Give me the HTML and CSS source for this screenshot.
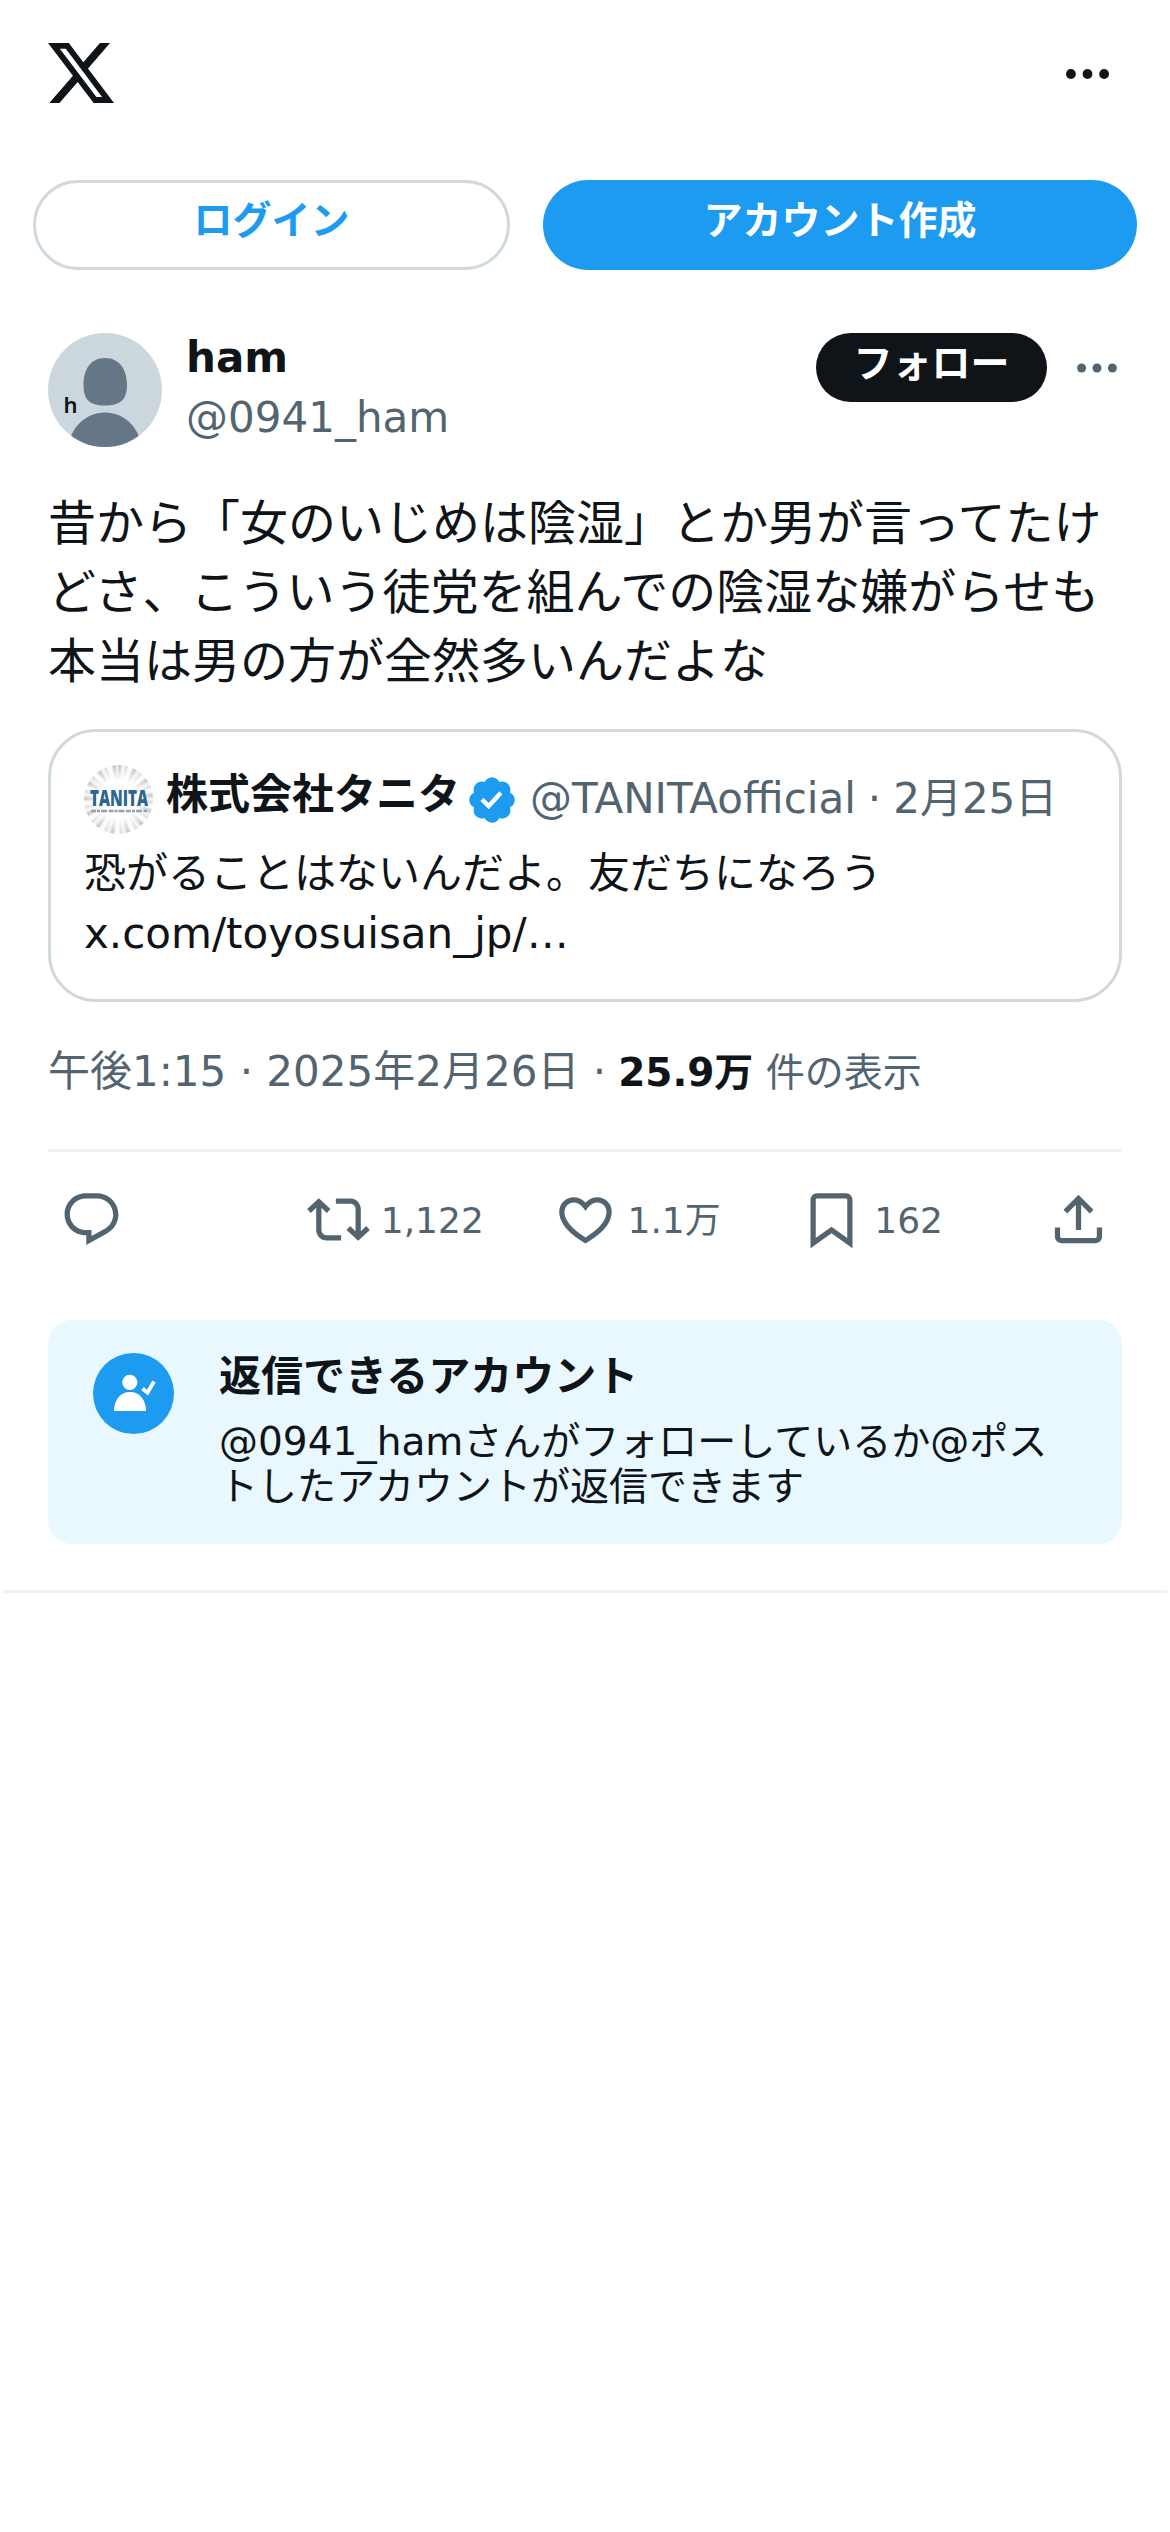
FILE: index.html
```html
<!DOCTYPE html>
<html lang="ja">
<head>
<meta charset="utf-8">
<title>ham (@0941_ham) / X</title>
<link rel="stylesheet" href="styles.css">
</head>
<body>
<header class="topbar">
  <svg class="logo" viewBox="1.254 2.25 21.573 19.5" preserveAspectRatio="none"><path d="M18.244 2.25h3.308l-7.227 8.26 8.502 11.24H16.17l-5.214-6.817L4.99 21.75H1.68l7.73-8.835L1.254 2.25H8.08l4.713 6.231zm-1.161 17.52h1.833L7.084 4.126H5.117z"/></svg>
  <svg class="more" viewBox="0 0 43 10"><circle cx="4.9" cy="5" r="4.9"/><circle cx="21.5" cy="5" r="4.9"/><circle cx="38.1" cy="5" r="4.9"/></svg>
</header>
<nav class="auth">
  <a class="btn login">ログイン</a>
  <a class="btn signup">アカウント作成</a>
</nav>
<main class="post">
  <div class="author">
    <svg class="avatar" viewBox="0 0 114 114">
      <defs><clipPath id="round"><circle cx="57" cy="57" r="57"/></clipPath></defs>
      <g clip-path="url(#round)">
        <rect width="114" height="114" fill="#ccd6dd"/>
        <path fill="#657786" d="M57 25c14 0 22 11 22 27 0 14-6 20.500-22 20.500S35.500 66 35.500 52C35.500 36 43 25 57 25zM20 114c3-20 18-34.500 37-34.500s34 14.500 37 34.500z"/>
        <text class="avatar-letter" x="15.500" y="80">h</text>
      </g>
    </svg>
    <div class="names">
      <div class="name">ham</div>
      <div class="handle">@0941_ham</div>
    </div>
    <a class="follow">フォロー</a>
    <svg class="post-more" viewBox="0 0 40 10"><circle cx="4.6" cy="5" r="4.5"/><circle cx="20" cy="5" r="4.5"/><circle cx="35.4" cy="5" r="4.5"/></svg>
  </div>
  <p class="body">昔から「女のいじめは陰湿」とか男が言ってたけ<br>どさ、こういう徒党を組んでの陰湿な嫌がらせも<br>本当は男の方が全然多いんだよな</p>
  <section class="quote">
    <div class="quote-head">
      <div class="quote-avatar">
        <svg viewBox="0 0 69 69"><text class="brand" x="6" y="41" textLength="58" lengthAdjust="spacingAndGlyphs">TANITA</text><path d="M7 46h56" fill="none" stroke="#8ea3b3" stroke-width="2.500" stroke-dasharray="5 1 3 1 6 1.500"/></svg>
      </div>
      <b class="quote-name">株式会社タニタ</b>
      <svg class="badge" viewBox="1.5 1.5 19 19"><path fill="#1d9bf0" d="M20.396 11c-.018-.646-.215-1.275-.57-1.816-.354-.54-.852-.972-1.438-1.246.223-.607.27-1.264.14-1.897-.131-.634-.437-1.218-.882-1.687-.47-.445-1.053-.75-1.687-.882-.633-.13-1.29-.083-1.897.14-.273-.587-.704-1.086-1.245-1.44S11.647 1.62 11 1.604c-.646.017-1.273.213-1.813.568s-.969.854-1.24 1.44c-.608-.223-1.267-.272-1.902-.14-.635.13-1.22.436-1.69.882-.445.47-.749 1.055-.878 1.688-.13.633-.08 1.29.144 1.896-.587.274-1.087.705-1.443 1.245-.356.54-.555 1.17-.574 1.817.02.647.218 1.276.574 1.817.356.54.856.972 1.443 1.245-.224.606-.274 1.263-.144 1.896.13.634.433 1.218.877 1.688.47.443 1.054.747 1.687.878.633.132 1.29.084 1.897-.136.274.586.705 1.084 1.246 1.439.54.354 1.17.551 1.816.569.647-.016 1.276-.213 1.817-.567s.972-.854 1.245-1.44c.604.239 1.266.296 1.903.164.636-.132 1.22-.447 1.68-.907.46-.46.776-1.044.908-1.681s.075-1.299-.165-1.903c.586-.274 1.084-.705 1.439-1.246.354-.54.551-1.17.569-1.816z"/><path fill="#fff" d="M9.662 14.85l-3.429-3.428 1.293-1.302 2.072 2.072 4.4-4.794 1.347 1.246z"/></svg>
      <span class="quote-meta">@TANITAofficial<span class="dot">·</span>2月25日</span>
    </div>
    <p class="quote-text">恐がることはないんだよ。友だちになろう<br>x.com/toyosuisan_jp/…</p>
  </section>
  <div class="stats">午後1:15 · 2025年2月26日 ·<span class="views"><b>25.9万</b> 件の表示</span></div>
  <div class="actions">
    <div class="action"><svg viewBox="0 0 24 24"><path d="M1.751 10c0-4.42 3.584-8 8.005-8h4.366c4.49 0 8.129 3.64 8.129 8.13 0 2.96-1.607 5.68-4.196 7.11l-8.054 4.46v-3.69h-.067c-4.49.1-8.183-3.51-8.183-8.01zm8.005-6c-3.317 0-6.005 2.69-6.005 6 0 3.37 2.77 6.08 6.138 6.01l.351-.01h1.761v2.3l5.087-2.81c1.951-1.08 3.163-3.13 3.163-5.36 0-3.39-2.744-6.13-6.129-6.13H9.756z"/></svg></div>
    <div class="action"><svg viewBox="0 0 24 24"><path d="M4.5 3.88l4.432 4.14-1.364 1.46L5.5 7.55V16c0 1.1.896 2 2 2H13v2H7.5c-2.209 0-4-1.79-4-4V7.55L1.432 9.48.068 8.02 4.5 3.88zM16.5 6H11V4h5.5c2.209 0 4 1.79 4 4v8.45l2.068-1.93 1.364 1.46-4.432 4.14-4.432-4.14 1.364-1.46 2.068 1.93V8c0-1.1-.896-2-2-2z"/></svg><span>1,122</span></div>
    <div class="action"><svg viewBox="0 0 24 24"><path d="M16.697 5.5c-1.222-.06-2.679.51-3.89 2.16l-.805 1.09-.806-1.09C9.984 6.01 8.526 5.44 7.304 5.5c-1.243.07-2.349.78-2.91 1.91-.552 1.12-.633 2.78.479 4.82 1.074 1.97 3.257 4.27 7.129 6.61 3.87-2.34 6.052-4.64 7.126-6.61 1.111-2.04 1.03-3.7.477-4.82-.561-1.13-1.666-1.84-2.908-1.91zm4.187 7.69c-1.351 2.48-4.001 5.12-8.379 7.67l-.503.3-.504-.3c-4.379-2.55-7.029-5.19-8.382-7.67-1.36-2.5-1.41-4.86-.514-6.67.887-1.79 2.647-2.91 4.601-3.01 1.651-.09 3.368.56 4.798 2.01 1.429-1.45 3.146-2.1 4.796-2.01 1.954.1 3.714 1.22 4.601 3.01.896 1.81.846 4.17-.514 6.67z"/></svg><span>1.1万</span></div>
    <div class="action"><svg viewBox="0 0 24 24"><path d="M4 4.5C4 3.12 5.119 2 6.5 2h11C18.881 2 20 3.12 20 4.5v18.44l-8-5.71-8 5.71V4.5zM6.5 4c-.276 0-.5.22-.5.5v14.56l6-4.29 6 4.29V4.5c0-.28-.224-.5-.5-.5h-11z"/></svg><span>162</span></div>
    <div class="action"><svg viewBox="0 0 24 24"><path d="M12 2.59l5.7 5.7-1.41 1.42L13 6.41V16h-2V6.41l-3.3 3.3-1.41-1.42L12 2.59zM21 15l-.02 3.51c0 1.38-1.12 2.49-2.5 2.49H5.5C4.11 21 3 19.88 3 18.5V15h2v3.5c0 .28.22.5.5.5h12.98c.28 0 .5-.22.5-.5L19 15h2z"/></svg></div>
  </div>
  <aside class="notice">
    <svg class="notice-icon" viewBox="0 0 81 81"><circle cx="40.5" cy="40.5" r="40.5" fill="#1d9bf0"/><circle cx="36.8" cy="29.3" r="7.6" fill="#fff"/><path fill="#fff" d="M21 58c0-11 6-19 16-19s16 8 16 19z"/><path d="M49.500 35.500l5 4.200 6.600-11.200" fill="none" stroke="#fff" stroke-width="3.800"/></svg>
    <div>
      <div class="notice-title">返信できるアカウント</div>
      <p class="notice-text">@0941_hamさんがフォローしているか@ポス<br>トしたアカウントが返信できます</p>
    </div>
  </aside>
</main>
<hr class="end">
</body>
</html>
```
FILE: styles.css
```css
* { box-sizing: border-box; }
body { margin: 0; background: #fff; color: #0f1419; font-family: "DejaVu Sans", "Noto Sans CJK JP", sans-serif; font-size: 42px; line-height: 60px; min-height: 2532px; }
p { margin: 0; }
svg { display: block; flex: none; }
.topbar { display: flex; justify-content: space-between; align-items: center; height: 147px; padding: 0 61px 0 48px; }
.logo { width: 66px; height: 60px; margin-top: -2px; fill: #0f1419; }
.more { width: 43px; height: 10px; fill: #0f1419; }
.auth { display: grid; grid-template-columns: 477px 594px; gap: 33px; padding: 33px 33px 0; }
.btn { height: 90px; border-radius: 45px; font-size: 39px; font-weight: 700; text-align: center; line-height: 82px; }
.login { border: 3px solid #cfd9de; color: #1d9bf0; line-height: 76px; }
.signup { background: #1d9bf0; color: #fff; }
.post { padding: 63px 48px 0; }
.author { display: flex; align-items: flex-start; height: 114px; }
.avatar { width: 114px; height: 114px; }
.avatar-letter { font: 600 22px "Noto Sans", sans-serif; fill: #0f1419; }
.names { margin: -5px auto 0 24px; }
.name { font-weight: 700; }
.handle, .quote-meta { color: #536471; }
.follow { width: 231px; height: 69px; border-radius: 35px; background: #0f1419; color: #fff; font-size: 39px; font-weight: 700; line-height: 62px; text-align: center; }
.post-more { width: 40px; height: 10px; margin: 30px 5px 0 30px; fill: #536471; }
.body { margin-top: 42px; font-size: 48px; line-height: 69px; white-space: nowrap; }
.quote { height: 273px; margin-top: 33px; padding: 33px 33px 0; border: 3px solid #cfd9de; border-radius: 48px; }
.quote-head { display: flex; height: 69px; white-space: nowrap; }
.quote-avatar { width: 69px; height: 69px; border-radius: 50%; background: radial-gradient(circle, #fff 38%, rgba(255,255,255,.15) 76%), repeating-conic-gradient(#b4b4b4 0 3deg, #ececec 7deg 10deg, #cacaca 14deg, #fafafa 18deg 23deg, #b4b4b4 27deg); }
.quote-avatar svg { width: 69px; height: 69px; }
.brand { font: 800 22px "Open Sans", sans-serif; fill: #2b668f; }
.quote-name { margin-left: 13px; }
.badge { width: 46px; height: 46px; margin: 12px 0 0 9px; }
.quote-meta { margin: 4px 0 0 15px; }
.dot { margin: 0 12px; }
.quote-text { margin-top: 10px; }
.stats { height: 147px; padding-top: 40px; color: #536471; white-space: nowrap; }
.views { margin-left: 12px; font-size: 39px; }
.views b { color: #0f1419; }
.actions { display: grid; grid-template-columns: repeat(4, 246.75px) 63px; align-items: center; height: 138px; padding-left: 12px; border-top: 3px solid #eff3f4; color: #536471; font-size: 36px; }
.action { display: flex; align-items: center; gap: 11px; }
.action span { padding-top: 2px; }
.action svg { width: 63px; height: 63px; fill: #536471; }
.notice { display: flex; height: 224px; margin-top: 33px; padding: 33px 36px 0 45px; gap: 45px; border-radius: 24px; background: #e9f7fe; white-space: nowrap; }
.notice-icon { width: 81px; height: 81px; }
.notice-title { margin-top: -6px; font-weight: 700; }
.notice-text { margin-top: 12px; font-size: 39px; line-height: 45px; }
.end { height: 3px; margin: 46px 3px 0; border: 0; background: #eff3f4; }
```
